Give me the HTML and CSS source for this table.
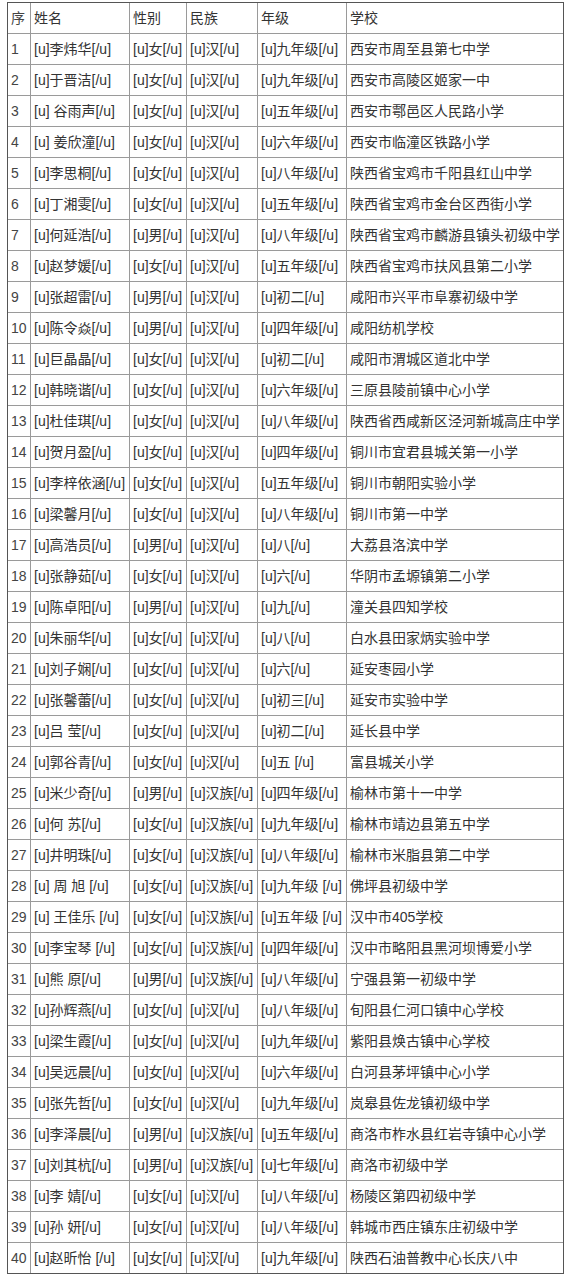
FILE: index.html
```html
<!DOCTYPE html>
<html lang="zh-CN">
<head>
<meta charset="utf-8">
<title>名单</title>
<link rel="stylesheet" href="styles.css">
</head>
<body>
<table class="roster">
<colgroup>
<col class="c-no"><col class="c-name"><col class="c-sex"><col class="c-eth"><col class="c-grade"><col class="c-school">
</colgroup>
<tbody>
<tr><td>序</td><td>姓名</td><td>性别</td><td>民族</td><td>年级</td><td>学校</td></tr>
<tr><td>1</td><td>[u]李炜华[/u]</td><td>[u]女[/u]</td><td>[u]汉[/u]</td><td>[u]九年级[/u]</td><td>西安市周至县第七中学</td></tr>
<tr><td>2</td><td>[u]于晋洁[/u]</td><td>[u]女[/u]</td><td>[u]汉[/u]</td><td>[u]九年级[/u]</td><td>西安市高陵区姬家一中</td></tr>
<tr><td>3</td><td>[u] 谷雨声[/u]</td><td>[u]女[/u]</td><td>[u]汉[/u]</td><td>[u]五年级[/u]</td><td>西安市鄠邑区人民路小学</td></tr>
<tr><td>4</td><td>[u] 姜欣潼[/u]</td><td>[u]女[/u]</td><td>[u]汉[/u]</td><td>[u]六年级[/u]</td><td>西安市临潼区铁路小学</td></tr>
<tr><td>5</td><td>[u]李思桐[/u]</td><td>[u]女[/u]</td><td>[u]汉[/u]</td><td>[u]八年级[/u]</td><td>陕西省宝鸡市千阳县红山中学</td></tr>
<tr><td>6</td><td>[u]丁湘雯[/u]</td><td>[u]女[/u]</td><td>[u]汉[/u]</td><td>[u]五年级[/u]</td><td>陕西省宝鸡市金台区西街小学</td></tr>
<tr><td>7</td><td>[u]何延浩[/u]</td><td>[u]男[/u]</td><td>[u]汉[/u]</td><td>[u]八年级[/u]</td><td>陕西省宝鸡市麟游县镇头初级中学</td></tr>
<tr><td>8</td><td>[u]赵梦媛[/u]</td><td>[u]女[/u]</td><td>[u]汉[/u]</td><td>[u]五年级[/u]</td><td>陕西省宝鸡市扶风县第二小学</td></tr>
<tr><td>9</td><td>[u]张超雷[/u]</td><td>[u]男[/u]</td><td>[u]汉[/u]</td><td>[u]初二[/u]</td><td>咸阳市兴平市阜寨初级中学</td></tr>
<tr><td>10</td><td>[u]陈令焱[/u]</td><td>[u]男[/u]</td><td>[u]汉[/u]</td><td>[u]四年级[/u]</td><td>咸阳纺机学校</td></tr>
<tr><td>11</td><td>[u]巨晶晶[/u]</td><td>[u]女[/u]</td><td>[u]汉[/u]</td><td>[u]初二[/u]</td><td>咸阳市渭城区道北中学</td></tr>
<tr><td>12</td><td>[u]韩晓谐[/u]</td><td>[u]女[/u]</td><td>[u]汉[/u]</td><td>[u]六年级[/u]</td><td>三原县陵前镇中心小学</td></tr>
<tr><td>13</td><td>[u]杜佳琪[/u]</td><td>[u]女[/u]</td><td>[u]汉[/u]</td><td>[u]八年级[/u]</td><td>陕西省西咸新区泾河新城高庄中学</td></tr>
<tr><td>14</td><td>[u]贺月盈[/u]</td><td>[u]女[/u]</td><td>[u]汉[/u]</td><td>[u]四年级[/u]</td><td>铜川市宜君县城关第一小学</td></tr>
<tr><td>15</td><td>[u]李梓依涵[/u]</td><td>[u]女[/u]</td><td>[u]汉[/u]</td><td>[u]五年级[/u]</td><td>铜川市朝阳实验小学</td></tr>
<tr><td>16</td><td>[u]梁馨月[/u]</td><td>[u]女[/u]</td><td>[u]汉[/u]</td><td>[u]八年级[/u]</td><td>铜川市第一中学</td></tr>
<tr><td>17</td><td>[u]高浩员[/u]</td><td>[u]男[/u]</td><td>[u]汉[/u]</td><td>[u]八[/u]</td><td>大荔县洛滨中学</td></tr>
<tr><td>18</td><td>[u]张静茹[/u]</td><td>[u]女[/u]</td><td>[u]汉[/u]</td><td>[u]六[/u]</td><td>华阴市孟塬镇第二小学</td></tr>
<tr><td>19</td><td>[u]陈卓阳[/u]</td><td>[u]男[/u]</td><td>[u]汉[/u]</td><td>[u]九[/u]</td><td>潼关县四知学校</td></tr>
<tr><td>20</td><td>[u]朱丽华[/u]</td><td>[u]女[/u]</td><td>[u]汉[/u]</td><td>[u]八[/u]</td><td>白水县田家炳实验中学</td></tr>
<tr><td>21</td><td>[u]刘子娴[/u]</td><td>[u]女[/u]</td><td>[u]汉[/u]</td><td>[u]六[/u]</td><td>延安枣园小学</td></tr>
<tr><td>22</td><td>[u]张馨蕾[/u]</td><td>[u]女[/u]</td><td>[u]汉[/u]</td><td>[u]初三[/u]</td><td>延安市实验中学</td></tr>
<tr><td>23</td><td>[u]吕 莹[/u]</td><td>[u]女[/u]</td><td>[u]汉[/u]</td><td>[u]初二[/u]</td><td>延长县中学</td></tr>
<tr><td>24</td><td>[u]郭谷青[/u]</td><td>[u]女[/u]</td><td>[u]汉[/u]</td><td>[u]五 [/u]</td><td>富县城关小学</td></tr>
<tr><td>25</td><td>[u]米少奇[/u]</td><td>[u]男[/u]</td><td>[u]汉族[/u]</td><td>[u]四年级[/u]</td><td>榆林市第十一中学</td></tr>
<tr><td>26</td><td>[u]何 苏[/u]</td><td>[u]女[/u]</td><td>[u]汉族[/u]</td><td>[u]九年级[/u]</td><td>榆林市靖边县第五中学</td></tr>
<tr><td>27</td><td>[u]井明珠[/u]</td><td>[u]女[/u]</td><td>[u]汉族[/u]</td><td>[u]八年级[/u]</td><td>榆林市米脂县第二中学</td></tr>
<tr><td>28</td><td>[u] 周 旭 [/u]</td><td>[u]女[/u]</td><td>[u]汉族[/u]</td><td>[u]九年级 [/u]</td><td>佛坪县初级中学</td></tr>
<tr><td>29</td><td>[u] 王佳乐 [/u]</td><td>[u]女[/u]</td><td>[u]汉族[/u]</td><td>[u]五年级 [/u]</td><td>汉中市405学校</td></tr>
<tr><td>30</td><td>[u]李宝琴 [/u]</td><td>[u]女[/u]</td><td>[u]汉族[/u]</td><td>[u]四年级[/u]</td><td>汉中市略阳县黑河坝博爱小学</td></tr>
<tr><td>31</td><td>[u]熊 原[/u]</td><td>[u]男[/u]</td><td>[u]汉族[/u]</td><td>[u]八年级[/u]</td><td>宁强县第一初级中学</td></tr>
<tr><td>32</td><td>[u]孙辉燕[/u]</td><td>[u]女[/u]</td><td>[u]汉[/u]</td><td>[u]八年级[/u]</td><td>旬阳县仁河口镇中心学校</td></tr>
<tr><td>33</td><td>[u]梁生霞[/u]</td><td>[u]女[/u]</td><td>[u]汉[/u]</td><td>[u]九年级[/u]</td><td>紫阳县焕古镇中心学校</td></tr>
<tr><td>34</td><td>[u]吴远晨[/u]</td><td>[u]女[/u]</td><td>[u]汉[/u]</td><td>[u]六年级[/u]</td><td>白河县茅坪镇中心小学</td></tr>
<tr><td>35</td><td>[u]张先哲[/u]</td><td>[u]女[/u]</td><td>[u]汉[/u]</td><td>[u]九年级[/u]</td><td>岚皋县佐龙镇初级中学</td></tr>
<tr><td>36</td><td>[u]李泽晨[/u]</td><td>[u]男[/u]</td><td>[u]汉族[/u]</td><td>[u]五年级[/u]</td><td>商洛市柞水县红岩寺镇中心小学</td></tr>
<tr><td>37</td><td>[u]刘其杭[/u]</td><td>[u]男[/u]</td><td>[u]汉族[/u]</td><td>[u]七年级[/u]</td><td>商洛市初级中学</td></tr>
<tr><td>38</td><td>[u]李 婧[/u]</td><td>[u]女[/u]</td><td>[u]汉[/u]</td><td>[u]八年级[/u]</td><td>杨陵区第四初级中学</td></tr>
<tr><td>39</td><td>[u]孙 妍[/u]</td><td>[u]女[/u]</td><td>[u]汉[/u]</td><td>[u]八年级[/u]</td><td>韩城市西庄镇东庄初级中学</td></tr>
<tr><td>40</td><td>[u]赵昕怡 [/u]</td><td>[u]女[/u]</td><td>[u]汉[/u]</td><td>[u]九年级[/u]</td><td>陕西石油普教中心长庆八中</td></tr>
</tbody>
</table>
</body>
</html>
```

FILE: styles.css
```css
html, body {
  margin: 0;
  padding: 0;
  background: #ffffff;
}

body {
  font-family: "Liberation Sans", "Noto Sans CJK SC", sans-serif;
  font-size: 14px;
  color: #333333;
}

.roster {
  margin: 2px 0 0 7px;
  width: 557px;
  table-layout: fixed;
  border-collapse: separate;
  border-spacing: 0;
  border: 1px solid #555555;
}

.c-no { width: 22px; }
.c-name { width: 99px; }
.c-sex { width: 57px; }
.c-eth { width: 71px; }
.c-grade { width: 89px; }
.c-school { width: 217px; }

.roster td {
  padding: 0 3px;
  height: 30px;
  line-height: 30px;
  white-space: nowrap;
  overflow: hidden;
  border-left: 1px solid #9a9a9a;
  border-top: 1px solid #9a9a9a;
  vertical-align: middle;
  box-sizing: content-box;
}

.roster td:first-child {
  border-left: none;
  padding-left: 3px;
  padding-right: 0;
  color: #444444;
}

.roster tr:first-child td {
  border-top: none;
}
```
